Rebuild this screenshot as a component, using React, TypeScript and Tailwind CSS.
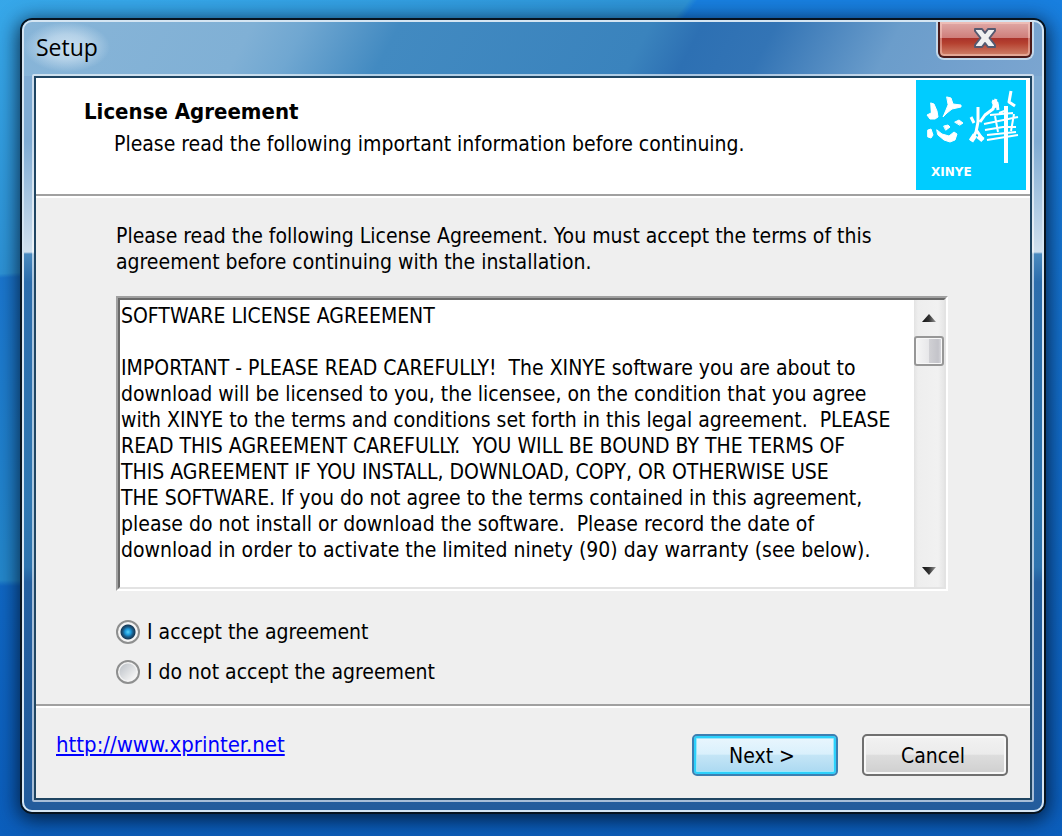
import React, { useState } from "react";

const LICENSE = `SOFTWARE LICENSE AGREEMENT

IMPORTANT - PLEASE READ CAREFULLY!  The XINYE software you are about to
download will be licensed to you, the licensee, on the condition that you agree
with XINYE to the terms and conditions set forth in this legal agreement.  PLEASE
READ THIS AGREEMENT CAREFULLY.  YOU WILL BE BOUND BY THE TERMS OF
THIS AGREEMENT IF YOU INSTALL, DOWNLOAD, COPY, OR OTHERWISE USE
THE SOFTWARE. If you do not agree to the terms contained in this agreement,
please do not install or download the software.  Please record the date of
download in order to activate the limited ninety (90) day warranty (see below).`;

function Logo() {
  return (
    <svg viewBox="0 0 110 110" className="mt-0.5 mr-1 size-[110px] shrink-0 bg-[#00ccff]" role="img" aria-label="XINYE">
      <g fill="#fff" stroke="#fff" strokeLinejoin="round" strokeLinecap="round">
        <path d="M15 23l3 1 3 7 1 6-3 2-5 0-3-4 4-2zM31 17l4 1 2 6 8 1 0 2-9 2-5 4-4 4 3-7 2-5zM12 50l3-1 2 6-2 3-3-1zM28 46l4-1 2 2-4 3zM39 42l4-2 4 3-3 2zM21 50l5 4 7 2 5-4 3 2-2 6-5 2-6-2-6-5z" />
        <g fill="none" strokeLinecap="butt">
          <path strokeWidth="3" d="M62 27l0 15-2 10-5 9M55 37l3 6M61 51l6 9M64 42l5-7 8-6 3-10M76 21l5 2 1 7M95 11l-2 11 6 4" />
          <path strokeWidth="2" d="M74 35l23-2M68 44l34-7M69 50l18-3 13 0M71 55l29-3M71 60l31-5M79 36l3 16M98 34l-3 17M83 33l8-3" />
          <path strokeWidth="4" d="M90 26v57" />
          <path strokeWidth="5" d="M78 22l3 5M55 61l4-6M62 56l5 4" />
        </g>
      </g>
      <text x="15" y="96" fill="#fff" fontSize="12" fontWeight="700" fontFamily="'DejaVu Sans', sans-serif">XINYE</text>
    </svg>
  );
}

function CloseButton() {
  return (
    <button
      type="button"
      aria-label="Close"
      className="h-[38px] w-[98px] rounded-b-[8px] border-2 border-t-0 border-[#c3d8ea]"
    >
      <span className="flex h-full items-start justify-center rounded-b-[6px] border-2 border-t-0 border-[#4a1a1a] bg-[linear-gradient(180deg,#e0aaa8_0,#cf7f7b_46%,#a9322a_47%,#b5402f_62%,#d0846c_100%)] pt-1.5 shadow-[inset_0_0_0_2px_rgba(255,215,205,0.45)]">
        <svg viewBox="0 0 22 20" className="h-5 w-[22px]" aria-hidden="true">
          <path
            d="M1 1h7l3 4 3-4h7v2l-5.500 7 5.500 7v2h-7l-3-4-3 4H1v-2l5.500-7L1 3z"
            fill="#f0f0f0"
            stroke="#555a70"
            strokeWidth="2"
            strokeLinejoin="round"
          />
        </svg>
      </span>
    </button>
  );
}

function ScrollBar() {
  return (
    <div className="flex w-[30px] shrink-0 flex-col items-center justify-between bg-[linear-gradient(90deg,#e3e3e3_0,#eeeeee_4px,#f1f1f1_80%,#e6e6e6_100%)]">
      <div className="flex flex-col items-center">
        <button type="button" aria-label="Scroll up" className="flex h-9 w-7 items-center justify-center">
          <svg viewBox="0 0 14 8" className="h-2 w-3.5" aria-hidden="true">
            <path d="M7 0l7 8H0z" fill="url(#arrow)" />
            <defs>
              <linearGradient id="arrow">
                <stop offset="0" stopColor="#111" />
                <stop offset="0.5" stopColor="#333" />
                <stop offset="1" stopColor="#999" />
              </linearGradient>
            </defs>
          </svg>
        </button>
        <button
          type="button"
          aria-label="Scroll position"
          className="h-[30px] w-[30px] rounded-[3px] border-2 border-[#979797] bg-[linear-gradient(90deg,#f6f6f6_0,#e8e8ea_48%,#d0d0d4_52%,#c4c4ca_85%,#dcdce0_100%)] shadow-[inset_0_0_0_1px_#f8f8f8]"
        />
      </div>
      <button type="button" aria-label="Scroll down" className="flex h-8 w-7 items-center justify-center">
        <svg viewBox="0 0 14 8" className="h-2 w-3.5" aria-hidden="true">
          <path d="M0 0h14L7 8z" fill="url(#arrow)" />
        </svg>
      </button>
    </div>
  );
}

function Choice({ label, checked, onChange }: { label: string; checked: boolean; onChange: () => void }) {
  return (
    <label className="flex h-10 items-center gap-[7px]">
      <input
        type="radio"
        name="agreement"
        checked={checked}
        onChange={onChange}
        className="size-6 appearance-none rounded-full border-2 border-[#8e8f8f] bg-[radial-gradient(circle_at_50%_50%,transparent_8px,#f4f4f4_9px),linear-gradient(135deg,#b4bac1,#f4f4f4_80%)] checked:bg-[radial-gradient(circle_at_50%_50%,transparent_7px,#f4f4f4_8px),radial-gradient(circle_at_50%_50%,#58d2f8_0,#1b96d8_3px,#1b5c88_5px,#163a58_7px)]"
      />
      {label}
    </label>
  );
}

export default function App() {
  const [accepted, setAccepted] = useState(true);
  return (
    <div className="flex min-h-screen bg-[radial-gradient(ellipse_851px_431px_at_-100px_-150px,#38aaec_0,#36a6e8_45%,#2d93d6_99%,transparent_100%),linear-gradient(180deg,transparent_262px,#1a76cf_263px,#2488cc_580px,transparent_586px),linear-gradient(180deg,#187fdf_0,#1470cc_40%,#0b5ebc_100%)] bg-[length:100%_100%,50%_100%,100%_100%] bg-no-repeat pt-[18px] pr-4 pb-[22px] pl-5 font-['DejaVu_Sans_Condensed','DejaVu_Sans',sans-serif] text-[21px] leading-[26px] text-black">
      <div className="flex flex-1 rounded-[12px] border-2 border-[#06131f] shadow-[0_4px_20px_2px_rgba(0,15,35,0.8)]">
        <main className="flex flex-1 flex-col rounded-[10px] border-2 border-[#d5e5f2] bg-[linear-gradient(118deg,#88b5d8_0,#80b0d5_22%,#70a7d1_27%,#428ac1_36%,#3a83bd_60%,#2d70b3_65%,#3374b5_72%,#6b9dcb_84%,#7ba5d0_100%),linear-gradient(180deg,#7fabd3_52px,#7fabd3_120px,#d0e0ee_230px,#4a8abf_232px,#2c6dac_260px,#3078b2_480px,#2e74ae_545px,#2460a0_560px,#235c9c_100%)] bg-[length:100%_54px,100%_100%] bg-no-repeat px-2 pb-2">
          <header className="flex h-[52px] items-start justify-between">
            <h1 className="-ml-2 rounded-full bg-[radial-gradient(closest-side,rgba(225,238,248,0.75),rgba(225,238,248,0.5)_50%,transparent)] px-3 pt-3 pb-3 font-['Open_Sans','Noto_Sans',sans-serif] text-[23px]">
              Setup
            </h1>
            <CloseButton />
          </header>
          <div className="flex flex-1 rounded-[2px] border-2 border-white/60">
            <div className="flex flex-1 flex-col border-2 border-[#1f4562] bg-[#efefef]">
              <section className="flex h-[118px] items-start justify-between border-b-2 border-[#a0a0a0] bg-white pl-12">
                <div className="flex flex-col gap-1.5 pt-[21px]">
                  <h2 className="text-[22px] font-bold">License Agreement</h2>
                  <p className="pl-[30px]">Please read the following important information before continuing.</p>
                </div>
                <Logo />
              </section>
              <section className="flex flex-1 flex-col gap-[21px] border-t-2 border-white pt-[25px] pr-[82px] pb-3 pl-20">
                <p>
                  Please read the following License Agreement. You must accept the terms of this
                  <br />
                  agreement before continuing with the installation.
                </p>
                <div className="flex flex-1 border-2 border-t-[#a0a0a0] border-r-white border-b-white border-l-[#a0a0a0]">
                  <div className="flex flex-1 border-2 border-t-[#696969] border-r-[#e3e3e3] border-b-[#e3e3e3] border-l-[#696969] bg-white">
                    <textarea
                      readOnly
                      wrap="off"
                      aria-label="License text"
                      value={LICENSE}
                      className="min-w-0 flex-1 resize-none overflow-hidden pt-[3px] pl-px outline-none"
                    />
                    <ScrollBar />
                  </div>
                </div>
                <fieldset>
                  <Choice label="I accept the agreement" checked={accepted} onChange={() => setAccepted(true)} />
                  <Choice label="I do not accept the agreement" checked={!accepted} onChange={() => setAccepted(false)} />
                </fieldset>
              </section>
              <footer className="flex h-[94px] items-start justify-between border-t-2 border-[#a0a0a0] pl-5 shadow-[inset_0_2px_0_#fff]">
                <a href="http://www.xprinter.net" className="mt-[26px] text-[22px] text-[#0000ff] underline decoration-2 underline-offset-2">
                  http://www.xprinter.net
                </a>
                <div className="flex gap-6 pt-7 pr-[22px]">
                  <button
                    type="button"
                    disabled={!accepted}
                    className="h-[42px] w-[146px] rounded-[5px] border-2 border-[#3c7fb1] bg-[linear-gradient(180deg,#eaf6fd_0,#d9f0fc_48%,#c4e5f6_50%,#a9d8f1_100%)] pt-0.5 pr-1.5 shadow-[inset_0_0_0_2px_#2cd0fb,inset_0_0_0_3px_#9be6fb]"
                  >
                    Next &gt;
                  </button>
                  <button
                    type="button"
                    className="h-[42px] w-[146px] rounded-[5px] border-2 border-[#707070] bg-[linear-gradient(180deg,#f2f2f2_0,#ebebeb_48%,#dddddd_50%,#cfcfcf_100%)] pt-0.5 pr-1 shadow-[inset_0_0_0_2px_#f8f8f8]"
                  >
                    Cancel
                  </button>
                </div>
              </footer>
            </div>
          </div>
        </main>
      </div>
    </div>
  );
}
